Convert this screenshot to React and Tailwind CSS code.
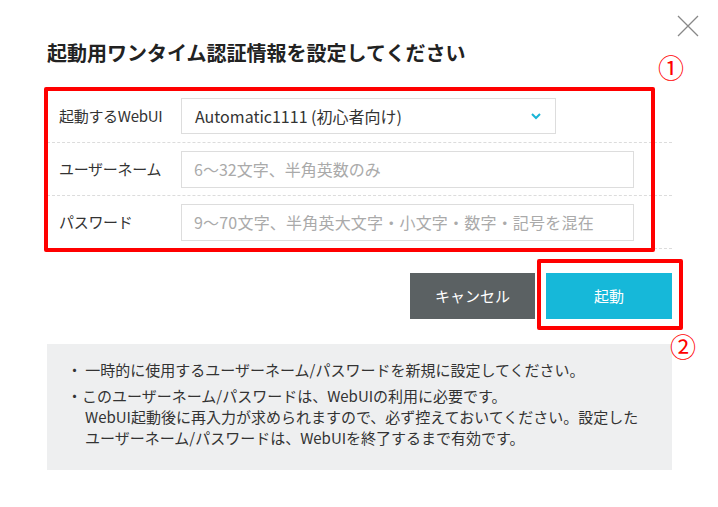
import React from "react";

const font = { fontFamily: '"Noto Sans CJK JP", "Noto Sans", sans-serif' };

function Row({ label, children }) {
  return (
    <div className="flex items-center h-[53px] border-b border-dashed border-[#dcdcdc]">
      <div className="w-[134px] pl-[12px] text-[15px] tracking-[-0.3px] text-[#333]">{label}</div>
      {children}
    </div>
  );
}

export default function App() {
  return (
    <div className="w-[718px] h-[507px] bg-white relative" style={font}>
      {/* Close */}
      <svg className="absolute left-[676px] top-[14px]" width="24" height="24" viewBox="0 0 24 24">
        <path d="M2 2L22 22M22 2L2 22" stroke="#888" strokeWidth="1.3" fill="none" />
      </svg>
      <div className="pl-[47px] w-[672px] pt-[39px]">
        <h1 className="text-[20px] font-bold text-[#222] leading-[28px]">起動用ワンタイム認証情報を設定してください</h1>
        <div className="relative mt-[23px]">
          <Row label="起動するWebUI">
            <div className="w-[375px] h-[36px] border border-[#ddd] flex items-center justify-between px-[13px] text-[16px] text-[#333]">
              <span>Automatic1111 (初心者向け)</span>
              <svg width="12" height="8" viewBox="0 0 12 8"><path d="M2 2L6 6L10 2" stroke="#19b5d6" strokeWidth="2" fill="none" /></svg>
            </div>
          </Row>
          <Row label="ユーザーネーム">
            <div className="w-[453px] h-[37px] border border-[#ddd] flex items-center px-[12px] text-[16px] text-[#aaa]">6～32文字、半角英数のみ</div>
          </Row>
          <Row label="パスワード">
            <div className="w-[453px] h-[37px] border border-[#ddd] flex items-center px-[12px] text-[16px] tracking-[0.2px] text-[#aaa]">9～70文字、半角英大文字・小文字・数字・記号を混在</div>
          </Row>
          <div className="absolute left-[-3px] top-[-3px] w-[611px] h-[165px] border-[4px] border-[#f00] rounded-[2px]" />
          <div className="absolute left-[611px] top-[-36px] text-[#f00] text-[26px] leading-none">①</div>
        </div>
        <div className="relative flex justify-end gap-[11px] mt-[24px]">
          <div className="w-[125px] h-[46px] bg-[#5b6163] text-white text-[15px] flex items-center justify-center">キャンセル</div>
          <div className="w-[126px] h-[46px] bg-[#16b8d9] text-white text-[15px] flex items-center justify-center">起動</div>
          <div className="absolute right-[-11px] top-[-14px] w-[146px] h-[71px] border-[4px] border-[#f00] rounded-[2px]" />
          <div className="absolute right-[-24px] top-[60px] text-[#f00] text-[26px] leading-none">②</div>
        </div>
        <div className="mt-[25px] bg-[#eeeff0] h-[126px] pl-[20px] pt-[15px] text-[15px] text-[#333] leading-[21px]">
          <div className="mb-[5px]">・ 一時的に使用するユーザーネーム/パスワードを新規に設定してください。</div>
          <div>・このユーザーネーム/パスワードは、WebUIの利用に必要です。</div>
          <div className="pl-[18px]">WebUI起動後に再入力が求められますので、必ず控えておいてください。設定した</div>
          <div className="pl-[18px]">ユーザーネーム/パスワードは、WebUIを終了するまで有効です。</div>
        </div>
      </div>
    </div>
  );
}
